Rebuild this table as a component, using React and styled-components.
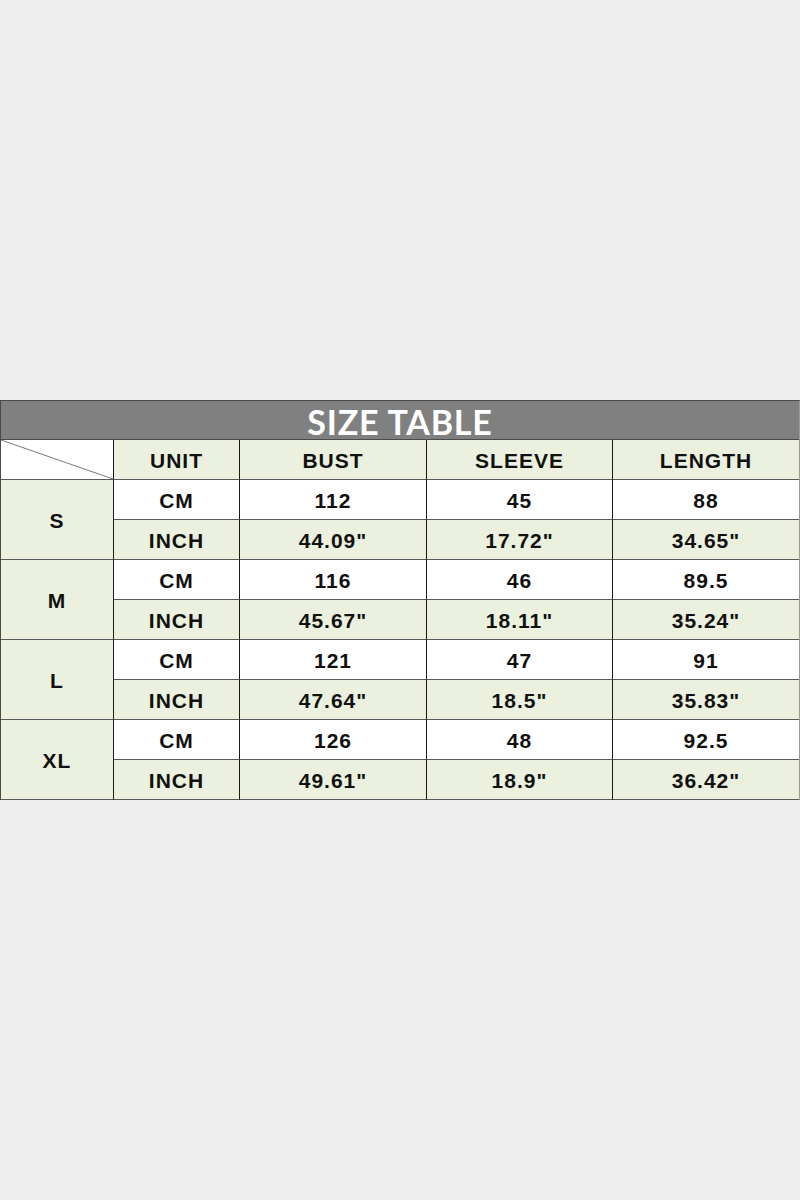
import React from "react";
import styled, { createGlobalStyle } from "styled-components";

const rows = [
  { size: "S", cm: ["112", "45", "88"], inch: ['44.09"', '17.72"', '34.65"'] },
  { size: "M", cm: ["116", "46", "89.5"], inch: ['45.67"', '18.11"', '35.24"'] },
  { size: "L", cm: ["121", "47", "91"], inch: ['47.64"', '18.5"', '35.83"'] },
  { size: "XL", cm: ["126", "48", "92.5"], inch: ['49.61"', '18.9"', '36.42"'] },
];

const SizeTable = () => {
  return (
    <Page>
      <GlobalStyle />
      <Table>
        <Title>SIZE TABLE</Title>
        <Grid>
          <Corner>
            <svg width="100%" height="100%" viewBox="0 0 113 40" preserveAspectRatio="none">
              <line x1="0" y1="0" x2="113" y2="40" stroke="#777" strokeWidth="1" />
            </svg>
          </Corner>
          <Cell $green>UNIT</Cell>
          <Cell $green>BUST</Cell>
          <Cell $green>SLEEVE</Cell>
          <Cell $green $last>LENGTH</Cell>
          {rows.map((r) => (
            <React.Fragment key={r.size}>
              <SizeCell>{r.size}</SizeCell>
              <Cell>CM</Cell>
              {r.cm.map((v, i) => (
                <Cell key={"c" + i} $last={i === 2}>{v}</Cell>
              ))}
              <Cell $green>INCH</Cell>
              {r.inch.map((v, i) => (
                <Cell key={"i" + i} $green $last={i === 2}>{v}</Cell>
              ))}
            </React.Fragment>
          ))}
        </Grid>
      </Table>
    </Page>
  );
};

export default SizeTable;

const GlobalStyle = createGlobalStyle`
  body {
    margin: 0;
    background: #eeeeee;
  }
`;

const Page = styled.div`
  width: 800px;
  height: 1200px;
  box-sizing: border-box;
  padding-top: 400px;
  background: #eeeeee;
`;

const Table = styled.div`
  width: 800px;
  box-sizing: border-box;
  border-top: 1px solid #4a4a4a;
  border-left: 1px solid #4a4a4a;
  border-right: 1px solid #9a9a9a;
`;

const Title = styled.div`
  height: 39px;
  box-sizing: border-box;
  padding-top: 3px;
  background: #808080;
  color: #ffffff;
  font-family: Lato, "Liberation Sans", sans-serif;
  font-weight: 700;
  font-size: 34px;
  letter-spacing: 0.8px;
  line-height: 35px;
  text-align: center;
  border-bottom: 1px solid #4a4a4a;
`;

const Grid = styled.div`
  display: grid;
  grid-template-columns: 113px 126px 187px 186px 186px;
  grid-auto-rows: 40px;
`;

const Cell = styled.div`
  display: flex;
  align-items: center;
  justify-content: center;
  box-sizing: border-box;
  background: ${(p) => (p.$green ? "#ebf1de" : "#ffffff")};
  border-bottom: 1px solid #5a5a5a;
  border-right: ${(p) => (p.$last ? "none" : "1px solid #1a1a1a")};
  font-family: "Liberation Sans", Arial, sans-serif;
  font-weight: 700;
  font-size: 21px;
  letter-spacing: 1px;
  color: #111111;
  padding-top: 2px;
`;

const Corner = styled.div`
  background: #ffffff;
  box-sizing: border-box;
  border-bottom: 1px solid #5a5a5a;
  border-right: 1px solid #1a1a1a;
  svg {
    display: block;
  }
`;

const SizeCell = styled(Cell)`
  grid-row: span 2;
  background: #ebf1de;
`;
